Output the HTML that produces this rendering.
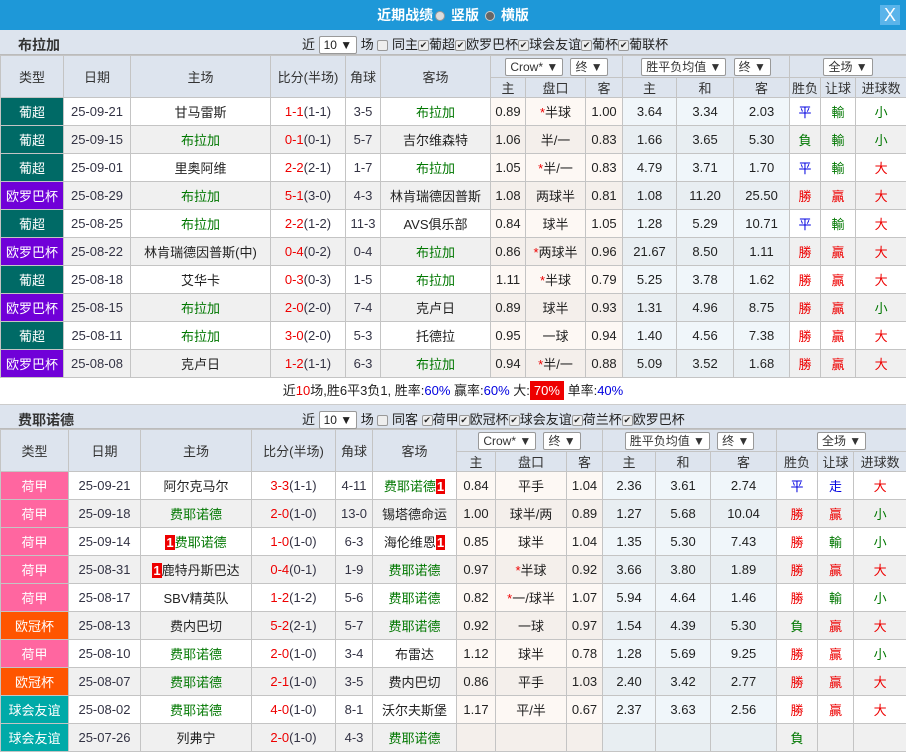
<!DOCTYPE html>
<html><head><meta charset="utf-8"><style>
*{box-sizing:border-box;margin:0;padding:0}
body{width:906px;height:753px;overflow:hidden;background:#fff;font-family:"Liberation Sans","Noto Sans CJK SC",sans-serif;font-size:13px;color:#222}
.top{height:30px;background:#1e98d8;color:#fff;text-align:center;font-weight:bold;font-size:14px;line-height:30px;position:relative}
.top .r{display:inline-block;width:10px;height:10px;border-radius:50%;background:#ddd;border:1px solid #999;vertical-align:middle;margin:0 2px}
.top .x{position:absolute;right:6px;top:5px;width:20px;height:20px;background:#5ab4ea;color:#fff;font-size:18px;line-height:20px;font-weight:normal}
.sec{height:25px;background:#dde4ee;position:relative;border-bottom:1px solid #bbb}
.sec b{position:absolute;left:18px;top:5px;font-size:14px;color:#333}
.sec .f{position:absolute;top:4px;font-size:13px}
.sel{display:inline-block;border:1px solid #999;background:#fff;padding:0 4px;height:18px;line-height:16px;font-size:12px;border-radius:2px}
.cb{display:inline-block;width:11px;height:11px;border:1px solid #999;background:#eee;vertical-align:middle;border-radius:2px;font-size:9px;line-height:9px;text-align:center}
table{border-collapse:collapse;table-layout:fixed;width:906px}
td{border:1px solid #c4c4c4;text-align:center;height:28px;white-space:nowrap;overflow:hidden;font-size:13px;padding:0}
th{border:1px solid #c4c4c4;background:#dde4ee;font-weight:normal;color:#333;font-size:13px;padding:0}
tr.h1 th{height:22px}tr.h2 th{height:18px}
tr.g td{background:#f0f0f0}
tr td.o{background:#fdf8f4}tr td.p{background:#f0f6fa}
tr.g td.o{background:#f4efeb}tr.g td.p{background:#e8eef2}
td.l{color:#fff}
.A{background:#006a66!important}.B{background:#7000d8!important}.C{background:#ff66a0!important}.D{background:#ff5500!important}.E{background:#00aaa8!important}
.gr{color:#007700}.rd{color:#e00}.bl{color:#0000e0}.dk{color:#334}
.n{background:#e00;color:#fff;font-weight:bold;padding:0 1px}
.sum{height:26px;text-align:center;line-height:26px;font-size:13px}
</style></head><body>
<div class="top">近期战绩<span class="r"></span> 竖版 <span class="r" style="background:#666;border-color:#ccc"></span> 横版<div class="x">X</div></div>
<div class="sec"><b>布拉加</b><div class="f" style="left:302px">近 <span class="sel">10 ▼</span> 场 <span class="cb"></span> 同主<span class="cb">✔</span>葡超<span class="cb">✔</span>欧罗巴杯<span class="cb">✔</span>球会友谊<span class="cb">✔</span>葡杯<span class="cb">✔</span>葡联杯</div></div>
<table>
<colgroup><col style="width:63px"><col style="width:67px"><col style="width:140px"><col style="width:75px"><col style="width:35px"><col style="width:110px"><col style="width:35px"><col style="width:60px"><col style="width:37px"><col style="width:54px"><col style="width:57px"><col style="width:56px"><col style="width:31px"><col style="width:35px"><col style="width:51px"></colgroup>
<tr class="h1"><th rowspan="2">类型</th><th rowspan="2">日期</th><th rowspan="2">主场</th><th rowspan="2">比分(半场)</th><th rowspan="2">角球</th><th rowspan="2">客场</th><th colspan="3"><span class="sel">Crow* ▼</span> &nbsp;<span class="sel">终 ▼</span></th><th colspan="3"><span class="sel">胜平负均值 ▼</span> &nbsp;<span class="sel">终 ▼</span></th><th colspan="3"><span class="sel">全场 ▼</span></th></tr>
<tr class="h2"><th>主</th><th>盘口</th><th>客</th><th>主</th><th>和</th><th>客</th><th>胜负</th><th>让球</th><th>进球数</th></tr>
<tr><td class="l A">葡超</td><td class="dk">25-09-21</td><td>甘马雷斯</td><td><span class="rd">1-1</span><span class="dk">(1-1)</span></td><td class="dk">3-5</td><td class="gr">布拉加</td><td class="o">0.89</td><td class="o"><span class="rd">*</span>半球</td><td class="o">1.00</td><td class="p">3.64</td><td class="p">3.34</td><td class="p">2.03</td><td class="bl">平</td><td class="gr">輸</td><td class="gr">小</td></tr>
<tr class="g"><td class="l A">葡超</td><td class="dk">25-09-15</td><td class="gr">布拉加</td><td><span class="rd">0-1</span><span class="dk">(0-1)</span></td><td class="dk">5-7</td><td>吉尔维森特</td><td class="o">1.06</td><td class="o">半/一</td><td class="o">0.83</td><td class="p">1.66</td><td class="p">3.65</td><td class="p">5.30</td><td class="gr">負</td><td class="gr">輸</td><td class="gr">小</td></tr>
<tr><td class="l A">葡超</td><td class="dk">25-09-01</td><td>里奥阿维</td><td><span class="rd">2-2</span><span class="dk">(2-1)</span></td><td class="dk">1-7</td><td class="gr">布拉加</td><td class="o">1.05</td><td class="o"><span class="rd">*</span>半/一</td><td class="o">0.83</td><td class="p">4.79</td><td class="p">3.71</td><td class="p">1.70</td><td class="bl">平</td><td class="gr">輸</td><td class="rd">大</td></tr>
<tr class="g"><td class="l B">欧罗巴杯</td><td class="dk">25-08-29</td><td class="gr">布拉加</td><td><span class="rd">5-1</span><span class="dk">(3-0)</span></td><td class="dk">4-3</td><td>林肯瑞德因普斯</td><td class="o">1.08</td><td class="o">两球半</td><td class="o">0.81</td><td class="p">1.08</td><td class="p">11.20</td><td class="p">25.50</td><td class="rd">勝</td><td class="rd">贏</td><td class="rd">大</td></tr>
<tr><td class="l A">葡超</td><td class="dk">25-08-25</td><td class="gr">布拉加</td><td><span class="rd">2-2</span><span class="dk">(1-2)</span></td><td class="dk">11-3</td><td>AVS俱乐部</td><td class="o">0.84</td><td class="o">球半</td><td class="o">1.05</td><td class="p">1.28</td><td class="p">5.29</td><td class="p">10.71</td><td class="bl">平</td><td class="gr">輸</td><td class="rd">大</td></tr>
<tr class="g"><td class="l B">欧罗巴杯</td><td class="dk">25-08-22</td><td>林肯瑞德因普斯(中)</td><td><span class="rd">0-4</span><span class="dk">(0-2)</span></td><td class="dk">0-4</td><td class="gr">布拉加</td><td class="o">0.86</td><td class="o"><span class="rd">*</span>两球半</td><td class="o">0.96</td><td class="p">21.67</td><td class="p">8.50</td><td class="p">1.11</td><td class="rd">勝</td><td class="rd">贏</td><td class="rd">大</td></tr>
<tr><td class="l A">葡超</td><td class="dk">25-08-18</td><td>艾华卡</td><td><span class="rd">0-3</span><span class="dk">(0-3)</span></td><td class="dk">1-5</td><td class="gr">布拉加</td><td class="o">1.11</td><td class="o"><span class="rd">*</span>半球</td><td class="o">0.79</td><td class="p">5.25</td><td class="p">3.78</td><td class="p">1.62</td><td class="rd">勝</td><td class="rd">贏</td><td class="rd">大</td></tr>
<tr class="g"><td class="l B">欧罗巴杯</td><td class="dk">25-08-15</td><td class="gr">布拉加</td><td><span class="rd">2-0</span><span class="dk">(2-0)</span></td><td class="dk">7-4</td><td>克卢日</td><td class="o">0.89</td><td class="o">球半</td><td class="o">0.93</td><td class="p">1.31</td><td class="p">4.96</td><td class="p">8.75</td><td class="rd">勝</td><td class="rd">贏</td><td class="gr">小</td></tr>
<tr><td class="l A">葡超</td><td class="dk">25-08-11</td><td class="gr">布拉加</td><td><span class="rd">3-0</span><span class="dk">(2-0)</span></td><td class="dk">5-3</td><td>托德拉</td><td class="o">0.95</td><td class="o">一球</td><td class="o">0.94</td><td class="p">1.40</td><td class="p">4.56</td><td class="p">7.38</td><td class="rd">勝</td><td class="rd">贏</td><td class="rd">大</td></tr>
<tr class="g"><td class="l B">欧罗巴杯</td><td class="dk">25-08-08</td><td>克卢日</td><td><span class="rd">1-2</span><span class="dk">(1-1)</span></td><td class="dk">6-3</td><td class="gr">布拉加</td><td class="o">0.94</td><td class="o"><span class="rd">*</span>半/一</td><td class="o">0.88</td><td class="p">5.09</td><td class="p">3.52</td><td class="p">1.68</td><td class="rd">勝</td><td class="rd">贏</td><td class="rd">大</td></tr>
</table>
<div class="sum">近<span class="rd">10</span>场,胜6平3负1, 胜率:<span class="bl">60%</span> 赢率:<span class="bl">60%</span> 大:<span style="background:#e00;color:#fff;padding:2px 4px">70%</span> 单率:<span class="bl">40%</span></div>
<div class="sec" style="border-top:1px solid #ccc"><b>费耶诺德</b><div class="f" style="left:302px">近 <span class="sel">10 ▼</span> 场 <span class="cb"></span> 同客 <span class="cb">✔</span>荷甲<span class="cb">✔</span>欧冠杯<span class="cb">✔</span>球会友谊<span class="cb">✔</span>荷兰杯<span class="cb">✔</span>欧罗巴杯</div></div>
<table>
<colgroup><col style="width:68px"><col style="width:72px"><col style="width:111px"><col style="width:84px"><col style="width:37px"><col style="width:84px"><col style="width:39px"><col style="width:71px"><col style="width:36px"><col style="width:53px"><col style="width:55px"><col style="width:66px"><col style="width:41px"><col style="width:36px"><col style="width:53px"></colgroup>
<tr class="h1"><th rowspan="2">类型</th><th rowspan="2">日期</th><th rowspan="2">主场</th><th rowspan="2">比分(半场)</th><th rowspan="2">角球</th><th rowspan="2">客场</th><th colspan="3"><span class="sel">Crow* ▼</span> &nbsp;<span class="sel">终 ▼</span></th><th colspan="3"><span class="sel">胜平负均值 ▼</span> &nbsp;<span class="sel">终 ▼</span></th><th colspan="3"><span class="sel">全场 ▼</span></th></tr>
<tr class="h2"><th>主</th><th>盘口</th><th>客</th><th>主</th><th>和</th><th>客</th><th>胜负</th><th>让球</th><th>进球数</th></tr>
<tr><td class="l C">荷甲</td><td class="dk">25-09-21</td><td>阿尔克马尔</td><td><span class="rd">3-3</span><span class="dk">(1-1)</span></td><td class="dk">4-11</td><td class="gr">费耶诺德<span class="n">1</span></td><td class="o">0.84</td><td class="o">平手</td><td class="o">1.04</td><td class="p">2.36</td><td class="p">3.61</td><td class="p">2.74</td><td class="bl">平</td><td class="bl">走</td><td class="rd">大</td></tr>
<tr class="g"><td class="l C">荷甲</td><td class="dk">25-09-18</td><td class="gr">费耶诺德</td><td><span class="rd">2-0</span><span class="dk">(1-0)</span></td><td class="dk">13-0</td><td>锡塔德命运</td><td class="o">1.00</td><td class="o">球半/两</td><td class="o">0.89</td><td class="p">1.27</td><td class="p">5.68</td><td class="p">10.04</td><td class="rd">勝</td><td class="rd">贏</td><td class="gr">小</td></tr>
<tr><td class="l C">荷甲</td><td class="dk">25-09-14</td><td class="gr"><span class="n">1</span>费耶诺德</td><td><span class="rd">1-0</span><span class="dk">(1-0)</span></td><td class="dk">6-3</td><td>海伦维恩<span class="n">1</span></td><td class="o">0.85</td><td class="o">球半</td><td class="o">1.04</td><td class="p">1.35</td><td class="p">5.30</td><td class="p">7.43</td><td class="rd">勝</td><td class="gr">輸</td><td class="gr">小</td></tr>
<tr class="g"><td class="l C">荷甲</td><td class="dk">25-08-31</td><td><span class="n">1</span>鹿特丹斯巴达</td><td><span class="rd">0-4</span><span class="dk">(0-1)</span></td><td class="dk">1-9</td><td class="gr">费耶诺德</td><td class="o">0.97</td><td class="o"><span class="rd">*</span>半球</td><td class="o">0.92</td><td class="p">3.66</td><td class="p">3.80</td><td class="p">1.89</td><td class="rd">勝</td><td class="rd">贏</td><td class="rd">大</td></tr>
<tr><td class="l C">荷甲</td><td class="dk">25-08-17</td><td>SBV精英队</td><td><span class="rd">1-2</span><span class="dk">(1-2)</span></td><td class="dk">5-6</td><td class="gr">费耶诺德</td><td class="o">0.82</td><td class="o"><span class="rd">*</span>一/球半</td><td class="o">1.07</td><td class="p">5.94</td><td class="p">4.64</td><td class="p">1.46</td><td class="rd">勝</td><td class="gr">輸</td><td class="gr">小</td></tr>
<tr class="g"><td class="l D">欧冠杯</td><td class="dk">25-08-13</td><td>费内巴切</td><td><span class="rd">5-2</span><span class="dk">(2-1)</span></td><td class="dk">5-7</td><td class="gr">费耶诺德</td><td class="o">0.92</td><td class="o">一球</td><td class="o">0.97</td><td class="p">1.54</td><td class="p">4.39</td><td class="p">5.30</td><td class="gr">負</td><td class="rd">贏</td><td class="rd">大</td></tr>
<tr><td class="l C">荷甲</td><td class="dk">25-08-10</td><td class="gr">费耶诺德</td><td><span class="rd">2-0</span><span class="dk">(1-0)</span></td><td class="dk">3-4</td><td>布雷达</td><td class="o">1.12</td><td class="o">球半</td><td class="o">0.78</td><td class="p">1.28</td><td class="p">5.69</td><td class="p">9.25</td><td class="rd">勝</td><td class="rd">贏</td><td class="gr">小</td></tr>
<tr class="g"><td class="l D">欧冠杯</td><td class="dk">25-08-07</td><td class="gr">费耶诺德</td><td><span class="rd">2-1</span><span class="dk">(1-0)</span></td><td class="dk">3-5</td><td>费内巴切</td><td class="o">0.86</td><td class="o">平手</td><td class="o">1.03</td><td class="p">2.40</td><td class="p">3.42</td><td class="p">2.77</td><td class="rd">勝</td><td class="rd">贏</td><td class="rd">大</td></tr>
<tr><td class="l E">球会友谊</td><td class="dk">25-08-02</td><td class="gr">费耶诺德</td><td><span class="rd">4-0</span><span class="dk">(1-0)</span></td><td class="dk">8-1</td><td>沃尔夫斯堡</td><td class="o">1.17</td><td class="o">平/半</td><td class="o">0.67</td><td class="p">2.37</td><td class="p">3.63</td><td class="p">2.56</td><td class="rd">勝</td><td class="rd">贏</td><td class="rd">大</td></tr>
<tr class="g"><td class="l E">球会友谊</td><td class="dk">25-07-26</td><td>列弗宁</td><td><span class="rd">2-0</span><span class="dk">(1-0)</span></td><td class="dk">4-3</td><td class="gr">费耶诺德</td><td class="o"></td><td class="o"></td><td class="o"></td><td class="p"></td><td class="p"></td><td class="p"></td><td class="gr">負</td><td></td><td></td></tr>
</table>
</body></html>
